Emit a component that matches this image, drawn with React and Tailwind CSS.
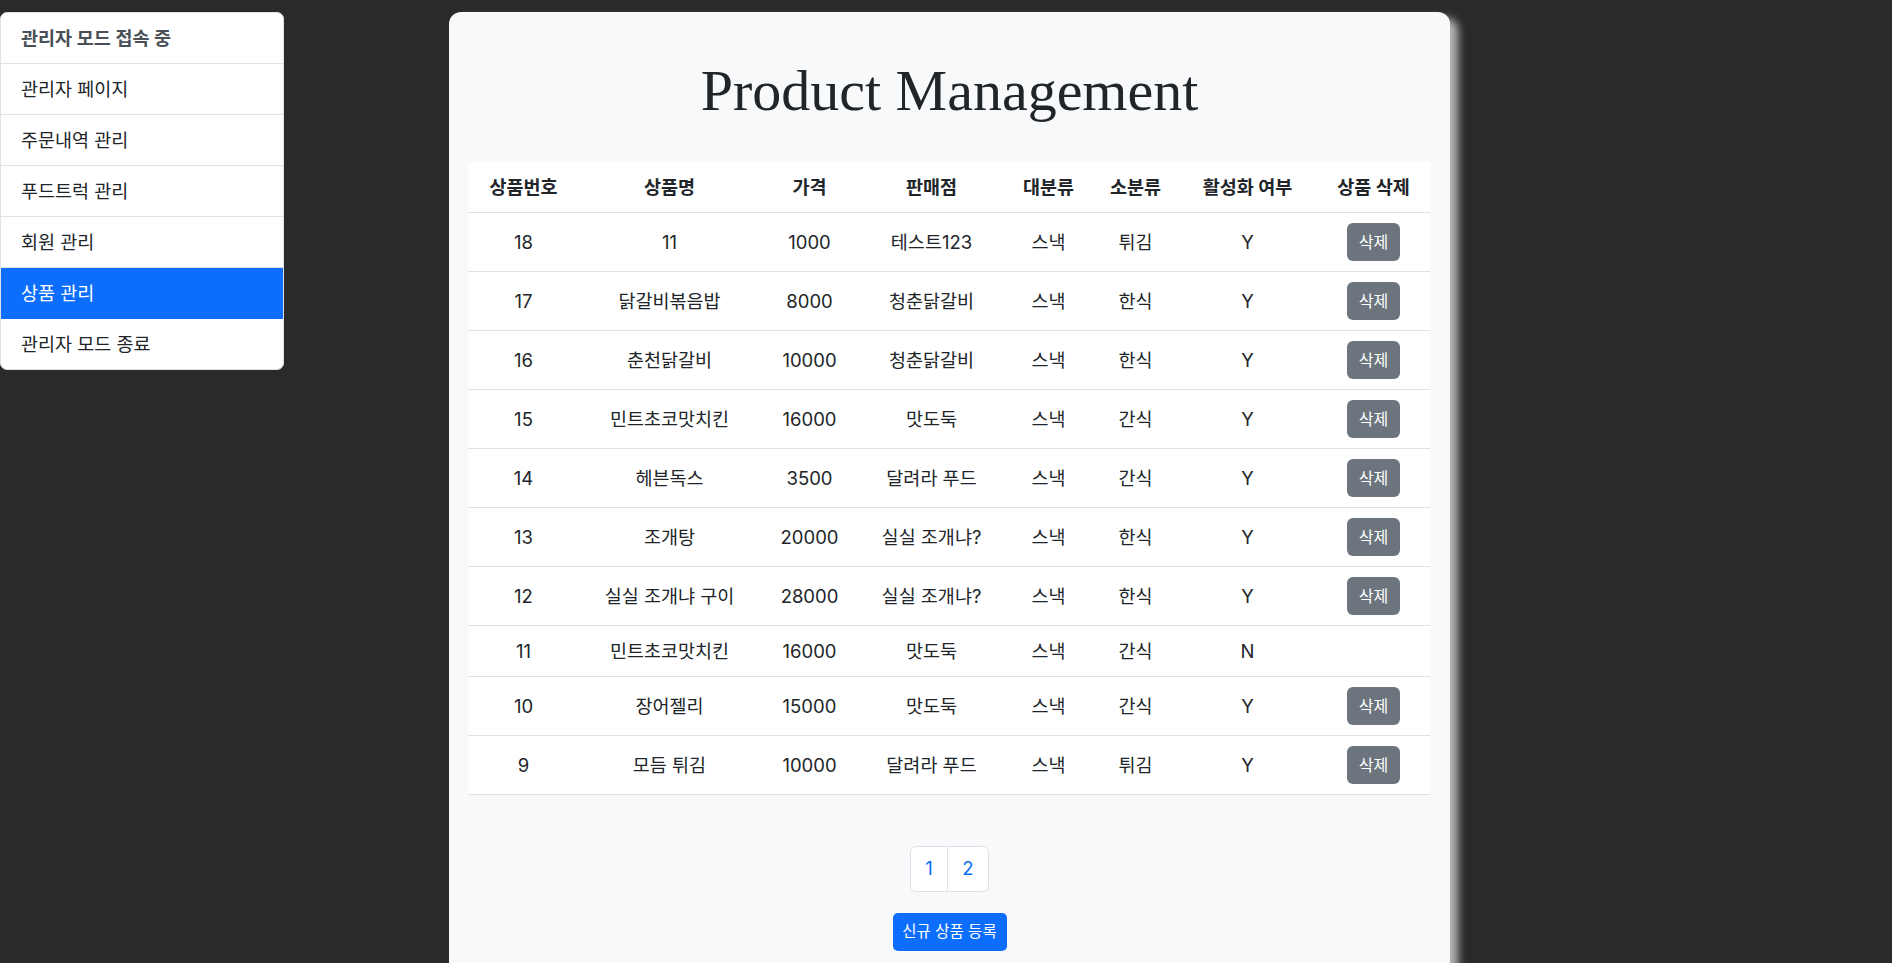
import React from "react";

const rows = [
  [18, "11", 1000, "테스트123", "스낵", "튀김", "Y", true],
  [17, "닭갈비볶음밥", 8000, "청춘닭갈비", "스낵", "한식", "Y", true],
  [16, "춘천닭갈비", 10000, "청춘닭갈비", "스낵", "한식", "Y", true],
  [15, "민트초코맛치킨", 16000, "맛도둑", "스낵", "간식", "Y", true],
  [14, "헤븐독스", 3500, "달려라 푸드", "스낵", "간식", "Y", true],
  [13, "조개탕", 20000, "실실 조개냐?", "스낵", "한식", "Y", true],
  [12, "실실 조개냐 구이", 28000, "실실 조개냐?", "스낵", "한식", "Y", true],
  [11, "민트초코맛치킨", 16000, "맛도둑", "스낵", "간식", "N", false],
  [10, "장어젤리", 15000, "맛도둑", "스낵", "간식", "Y", true],
  [9, "모듬 튀김", 10000, "달려라 푸드", "스낵", "튀김", "Y", true],
];

const headers = ["상품번호", "상품명", "가격", "판매점", "대분류", "소분류", "활성화 여부", "상품 삭제"];
const widths = [111, 181, 99, 145, 89, 85, 139, 113];

const menu = ["관리자 페이지", "주문내역 관리", "푸드트럭 관리", "회원 관리", "상품 관리", "관리자 모드 종료"];

export default function App() {
  return (
    <div
      className="min-h-[963px] bg-[#2a2a2b] pt-[12px] flex items-start text-[#212529]"
      style={{ fontFamily: "Inter, 'Noto Sans CJK KR', sans-serif" }}
    >
      <div className="w-[284px] shrink-0 bg-white rounded-[7px] border border-[#dee2e6] overflow-hidden">
        <div className="pl-[20px] py-[10px] leading-[30px] text-[18.5px] font-semibold text-[#495057] border-b border-[#dee2e6]">
          관리자 모드 접속 중
        </div>
        {menu.map((m, i) => (
          <div
            key={m}
            className={
              i === 4
                ? "pl-[20px] py-[10px] leading-[30px] text-[18.5px] bg-[#0d6efd] text-white border-b border-[#0d6efd]"
                : i === menu.length - 1
                ? "pl-[20px] py-[10px] leading-[30px] text-[18.5px]"
                : "pl-[20px] py-[10px] leading-[30px] text-[18.5px] border-b border-[#dee2e6]"
            }
          >
            {m}
          </div>
        ))}
      </div>

      <div className="ml-[165px] w-[1001px] shrink-0 bg-[#f8f9fa] rounded-[12px] px-[19px] pt-[44px] pb-[40px] shadow-[8px_6px_8px_rgba(190,190,190,0.95)]">
        <h1
          className="text-center text-[58px] leading-[70px] font-normal mb-[36px]"
          style={{ fontFamily: "'Liberation Serif', serif" }}
        >
          Product Management
        </h1>

        <table className="w-[962px] table-fixed bg-white border-collapse text-[18.5px]">
          <colgroup>
            {widths.map((w, i) => (
              <col key={i} style={{ width: w }} />
            ))}
          </colgroup>
          <thead>
            <tr className="border-b border-[#dee2e6]">
              {headers.map((h) => (
                <th key={h} className="py-[10px] leading-[30px] font-bold text-center">
                  {h}
                </th>
              ))}
            </tr>
          </thead>
          <tbody>
            {rows.map((r) => (
              <tr key={r[0]} className="border-b border-[#dee2e6]">
                {r.slice(0, 7).map((c, i) => (
                  <td key={i} className="py-[10px] leading-[30px] text-center align-middle">
                    {c}
                  </td>
                ))}
                <td className="py-[10px] leading-[30px] text-center align-middle">
                  {r[7] && (
                    <button className="inline-flex items-center justify-center w-[53px] h-[38px] align-middle bg-[#6c757d] text-white rounded-[6px] text-[16px] leading-[38px]">
                      삭제
                    </button>
                  )}
                </td>
              </tr>
            ))}
          </tbody>
        </table>

        <div className="flex justify-center mt-[51px]">
          <div className="flex h-[46px] bg-white border border-[#dee2e6] rounded-[6px] text-[#0d6efd] text-[18.5px]">
            <span className="w-[37px] flex items-center justify-center border-r border-[#dee2e6]">1</span>
            <span className="w-[40px] flex items-center justify-center">2</span>
          </div>
        </div>

        <div className="flex justify-center mt-[21px]">
          <button className="w-[114px] h-[38px] bg-[#0d6efd] text-white rounded-[5px] text-[15.5px] flex items-center justify-center">
            신규 상품 등록
          </button>
        </div>
      </div>
    </div>
  );
}
